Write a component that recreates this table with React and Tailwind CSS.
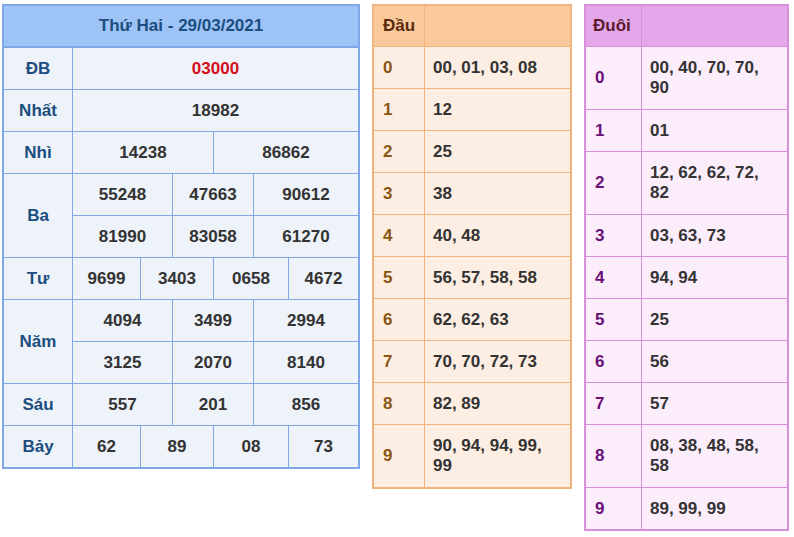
import React from "react";

const font = { fontFamily: '"Liberation Sans", Arial, sans-serif' };

function MainTable() {
  const cell = "bg-[#eef2f9] flex items-center justify-center text-[#333333]";
  const label = "bg-[#eef2f9] flex items-center justify-center text-[#1b4e7e]";
  return (
    <div className="border-2 border-[#80a8e6] bg-[#80a8e6] shrink-0">
      <div className="grid grid-cols-[68px_67px_31px_40px_39px_34px_69px] auto-rows-[41px] gap-px">
        <div className="col-span-7 h-[40px] bg-[#9dc3f7] flex items-center justify-center text-[#1b4e7e]">
          Thứ Hai - 29/03/2021
        </div>
        <div className={label}>ĐB</div>
        <div className={cell + " col-span-6 !text-[#d40f1c]"}>03000</div>

        <div className={label}>Nhất</div>
        <div className={cell + " col-span-6"}>18982</div>

        <div className={label}>Nhì</div>
        <div className={cell + " col-span-3"}>14238</div>
        <div className={cell + " col-span-3"}>86862</div>

        <div className={label + " row-span-2"}>Ba</div>
        <div className={cell + " col-span-2"}>55248</div>
        <div className={cell + " col-span-2"}>47663</div>
        <div className={cell + " col-span-2"}>90612</div>
        <div className={cell + " col-span-2"}>81990</div>
        <div className={cell + " col-span-2"}>83058</div>
        <div className={cell + " col-span-2"}>61270</div>

        <div className={label}>Tư</div>
        <div className={cell}>9699</div>
        <div className={cell + " col-span-2"}>3403</div>
        <div className={cell + " col-span-2"}>0658</div>
        <div className={cell}>4672</div>

        <div className={label + " row-span-2"}>Năm</div>
        <div className={cell + " col-span-2"}>4094</div>
        <div className={cell + " col-span-2"}>3499</div>
        <div className={cell + " col-span-2"}>2994</div>
        <div className={cell + " col-span-2"}>3125</div>
        <div className={cell + " col-span-2"}>2070</div>
        <div className={cell + " col-span-2"}>8140</div>

        <div className={label}>Sáu</div>
        <div className={cell + " col-span-2"}>557</div>
        <div className={cell + " col-span-2"}>201</div>
        <div className={cell + " col-span-2"}>856</div>

        <div className={label}>Bảy</div>
        <div className={cell}>62</div>
        <div className={cell + " col-span-2"}>89</div>
        <div className={cell + " col-span-2"}>08</div>
        <div className={cell}>73</div>
      </div>
    </div>
  );
}

const dau = [
  ["0", ["00, 01, 03, 08"]],
  ["1", ["12"]],
  ["2", ["25"]],
  ["3", ["38"]],
  ["4", ["40, 48"]],
  ["5", ["56, 57, 58, 58"]],
  ["6", ["62, 62, 63"]],
  ["7", ["70, 70, 72, 73"]],
  ["8", ["82, 89"]],
  ["9", ["90, 94, 94, 99,", "99"]],
];

const duoi = [
  ["0", ["00, 40, 70, 70,", "90"]],
  ["1", ["01"]],
  ["2", ["12, 62, 62, 72,", "82"]],
  ["3", ["03, 63, 73"]],
  ["4", ["94, 94"]],
  ["5", ["25"]],
  ["6", ["56"]],
  ["7", ["57"]],
  ["8", ["08, 38, 48, 58,", "58"]],
  ["9", ["89, 99, 99"]],
];

function SideTable({ title, rows, border, head, body, titleColor, digitColor, labelW, titlePad }) {
  return (
    <div className={"border-2 shrink-0 " + border}>
      <div className={"grid gap-px " + labelW}>
        <div className={"h-[40px] flex items-center " + head + " " + titlePad + " " + titleColor}>{title}</div>
        <div className={"h-[40px] " + head}></div>
        {rows.map(([d, lines]) => {
          const h = lines.length > 1 ? "h-[62px]" : "h-[41px]";
          return (
            <React.Fragment key={d}>
              <div className={"flex items-center pl-[9px] " + h + " " + body + " " + digitColor}>{d}</div>
              <div className={"flex flex-col justify-center pl-[8px] leading-[20px] text-[#333333] " + h + " " + body}>
                {lines.map((l, i) => (
                  <div key={i}>{l}</div>
                ))}
              </div>
            </React.Fragment>
          );
        })}
      </div>
    </div>
  );
}

export default function App() {
  return (
    <div
      className="w-[794px] h-[537px] bg-white flex items-start gap-[12px] pl-[2px] pt-[4px] text-[17px] font-bold overflow-hidden"
      style={font}
    >
      <MainTable />
      <SideTable
        title="Đầu"
        rows={dau}
        border="border-[#f0b47c] bg-[#f0b47c]"
        head="bg-[#f9c99c]"
        body="bg-[#fdeee3]"
        titleColor="text-[#5a2a0c]"
        digitColor="text-[#8a5712]"
        labelW="grid-cols-[50px_145px]"
        titlePad="pl-[9px]"
      />
      <SideTable
        title="Đuôi"
        rows={duoi}
        border="border-[#d88fdc] bg-[#d88fdc]"
        head="bg-[#e4a8ea]"
        body="bg-[#fcedfb]"
        titleColor="text-[#5c1a2e]"
        digitColor="text-[#6a1178]"
        labelW="grid-cols-[55px_145px]"
        titlePad="pl-[7px]"
      />
    </div>
  );
}
